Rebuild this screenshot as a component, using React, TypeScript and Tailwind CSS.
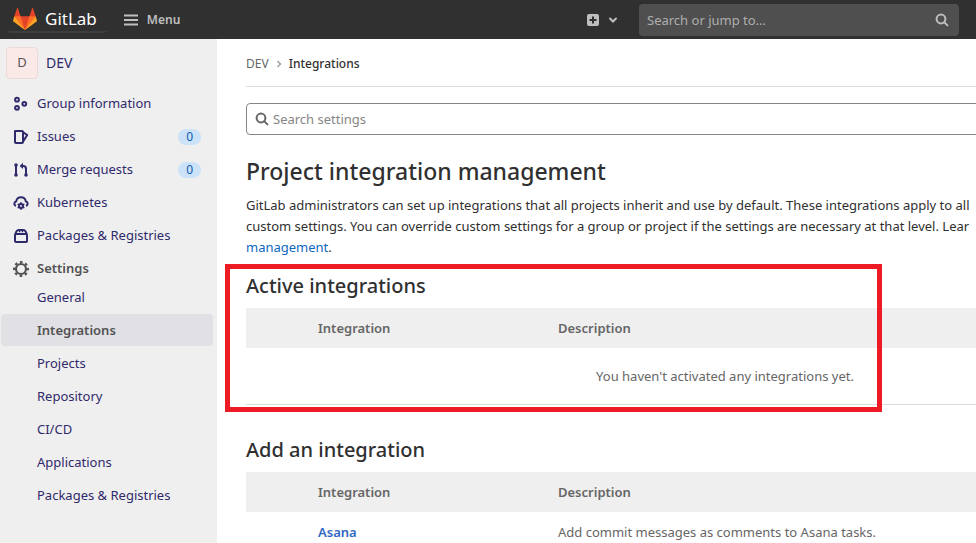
import type { ReactNode } from 'react';
import { useState } from 'react';

interface NavItem {
  label: string;
  icon: ReactNode;
  count?: number;
}

interface Integration {
  name: string;
  description: string;
}

const GroupIcon = () => (
  <svg viewBox="0 0 16 16" className="size-4" fill="none" stroke="currentColor" strokeWidth="2">
    <circle cx="4" cy="3.7" r="1.9" />
    <circle cx="4" cy="11.8" r="1.9" />
    <circle cx="11.3" cy="7.8" r="1.9" />
  </svg>
);

const IssuesIcon = () => (
  <svg viewBox="0 0 16 16" className="size-4" fill="none" stroke="currentColor" strokeWidth="2" strokeLinejoin="round">
    <path d="M2 2h7a1 1 0 0 1 1 1v10a1 1 0 0 1-1 1H3a1 1 0 0 1-1-1z" />
    <path d="M10 3.2 14.2 6 10 12.6" />
  </svg>
);

const MergeIcon = () => (
  <svg viewBox="0 0 16 16" className="size-4" fill="none" stroke="currentColor" strokeWidth="2">
    <path d="M3 3v10M8.5 4h1.8A2.7 2.7 0 0 1 13 6.7V13" />
    <path d="M10 .8 6.6 3.9 10 7z" fill="currentColor" stroke="none" />
    <circle cx="3" cy="3" r="1.8" fill="currentColor" stroke="none" />
    <circle cx="3" cy="13" r="1.8" fill="currentColor" stroke="none" />
    <circle cx="13" cy="13" r="1.8" fill="currentColor" stroke="none" />
  </svg>
);

const CloudGearIcon = () => (
  <svg viewBox="0 0 16 16" className="size-4" fill="none" stroke="currentColor" strokeWidth="2" strokeLinecap="round">
    <path d="M2.2 10.6A2.6 2.6 0 0 1 3.2 6.2 4.9 4.9 0 0 1 12.8 6.2 2.6 2.6 0 0 1 13.8 10.6" />
    <circle cx="8" cy="11" r="2" />
    <path d="M8 7.8v.6M8 13.6v.6M5.2 9.4l.5.3M10.3 12.3l.5.3M5.2 12.6l.5-.3M10.3 9.7l.5-.3" strokeWidth="1.6" />
  </svg>
);

const PackageIcon = () => (
  <svg viewBox="0 0 16 16" className="size-4" fill="none" stroke="currentColor" strokeWidth="2" strokeLinejoin="round">
    <rect x="2" y="6" width="12" height="8" rx="1" />
    <path d="M2.4 6C3 3.5 4.2 2 6 2h4c1.8 0 3 1.5 3.6 4" />
    <path d="M6.6 2v2.2M9.4 2v2.2" strokeWidth="1.4" />
  </svg>
);

const GearIcon = () => (
  <svg viewBox="0 0 16 16" className="size-4" fill="none" stroke="currentColor">
    <circle cx="8" cy="8" r="5" strokeWidth="2.2" />
    <circle cx="8" cy="8" r="6.9" strokeWidth="2.2" strokeDasharray="2.6 2.819" strokeDashoffset="1.3" />
  </svg>
);

const SearchIcon = () => (
  <svg viewBox="0 0 14 14" className="size-3.5" fill="none" stroke="currentColor" strokeWidth="2">
    <circle cx="6" cy="6" r="4.4" />
    <path d="m9.4 9.4 3 3" strokeLinecap="round" />
  </svg>
);

const TanukiLogo = () => (
  <svg viewBox="0 0 36 36" className="size-6">
    <path fill="#e24329" d="m2 14 9.38 9v-9l-4-12.28c-.205-.632-1.176-.632-1.38 0z" />
    <path fill="#e24329" d="m34 14-9.38 9v-9l4-12.28c.205-.632 1.176-.632 1.38 0z" />
    <path fill="#e24329" d="M18 34.38 3 14h30z" />
    <path fill="#fc6d26" d="M18 34.38 11.38 14H2l4 11z" />
    <path fill="#fc6d26" d="M18 34.38 24.62 14H34l-4 11z" />
    <path fill="#fca326" d="M2 14 .1 20.16c-.18.565 0 1.2.5 1.56l17.42 12.66z" />
    <path fill="#fca326" d="m34 14 1.9 6.16c.18.565 0 1.2-.5 1.56L18 34.38z" />
  </svg>
);

const navItems: NavItem[] = [
  { label: 'Group information', icon: <GroupIcon /> },
  { label: 'Issues', icon: <IssuesIcon />, count: 0 },
  { label: 'Merge requests', icon: <MergeIcon />, count: 0 },
  { label: 'Kubernetes', icon: <CloudGearIcon /> },
  { label: 'Packages & Registries', icon: <PackageIcon /> },
];

const settingsItems = [
  'General',
  'Integrations',
  'Projects',
  'Repository',
  'CI/CD',
  'Applications',
  'Packages & Registries',
];

const available: Integration[] = [
  { name: 'Asana', description: 'Add commit messages as comments to Asana tasks.' },
];

function IntegrationTable({ label, rows }: { label: string; rows: Integration[] }) {
  return (
    <table aria-label={label} className="w-full table-fixed text-left">
      <colgroup>
        <col className="w-14" />
        <col className="w-60" />
        <col />
      </colgroup>
      <thead className="bg-[#efefef] text-[#666]">
        <tr className="h-10">
          <th />
          <th className="px-4 pt-0.5 font-semibold">Integration</th>
          <th className="px-4 pt-0.5 font-semibold">Description</th>
        </tr>
      </thead>
      <tbody>
        {rows.length === 0 && (
          <tr className="h-14 border-b border-[#dcdcde]">
            <td colSpan={3} className="pt-0.5 text-center text-[#666]">
              You haven't activated any integrations yet.
            </td>
          </tr>
        )}
        {rows.map((row) => (
          <tr key={row.name} className="h-10 border-b border-[#dcdcde]">
            <td />
            <td className="px-4 pt-0.5">
              <a href="#" className="font-semibold text-[#2f68c4]">{row.name}</a>
            </td>
            <td className="px-4 pt-0.5 text-[#666]">{row.description}</td>
          </tr>
        ))}
      </tbody>
    </table>
  );
}

export default function App() {
  const [query, setQuery] = useState('');
  const [filter, setFilter] = useState('');

  return (
    <div className="flex h-screen flex-col overflow-hidden bg-white font-['Noto_Sans',sans-serif] text-[13px] text-[#303030]">
      {/* Top bar */}
      <header className="flex h-[39px] shrink-0 items-center bg-[#303030] pr-[17px] pl-[7px] text-[#bfbfbf]">
        <a href="#" className="flex h-[33px] items-center gap-2 self-start rounded-b border-b-2 border-[#3e3e3e] pt-1.5 pr-2.5 pl-1.5 text-white">
          <TanukiLogo />
          <span className="text-[17px]">GitLab</span>
        </a>
        <button className="ml-4 flex items-center gap-2 text-xs font-semibold">
          <svg viewBox="0 0 16 16" className="size-4" stroke="currentColor" strokeWidth="2">
            <path d="M1 3.5h14M1 8h14M1 12.5h14" />
          </svg>
          Menu
        </button>
        <button aria-label="Create new" className="mr-5 ml-auto flex items-center gap-2">
          <svg viewBox="0 0 12 12" className="size-3">
            <rect width="12" height="12" rx="2" fill="currentColor" />
            <path d="M6 2.5v7M2.5 6h7" stroke="#303030" strokeWidth="2" />
          </svg>
          <svg viewBox="0 0 12 12" className="size-3" fill="none" stroke="currentColor" strokeWidth="2" strokeLinecap="round">
            <path d="m3 4.5 3 3 3-3" />
          </svg>
        </button>
        <label className="flex h-8 w-80 items-center rounded bg-[#4f4f4f] pr-2.5 pl-2">
          <input
            type="text"
            aria-label="Search or jump to"
            placeholder="Search or jump to…"
            value={query}
            onChange={(e) => setQuery(e.target.value)}
            className="min-w-0 flex-1 pt-0.5 outline-none placeholder:text-[#aeaeae]"
          />
          <SearchIcon />
        </label>
      </header>

      <div className="flex min-h-0 flex-1">
        {/* Sidebar */}
        <nav className="w-[217px] shrink-0 bg-[#efefef] pr-1 pl-px text-[#2f2a6b]">
          <a href="#" className="flex h-[47px] items-center gap-2 pl-[5px]">
            <span className="flex size-8 items-center justify-center rounded border border-[#ecd9d8] bg-[#fbe9e7] text-[#555]">
              D
            </span>
            <span className="text-sm">DEV</span>
          </a>
          <ul>
            {navItems.map((item) => (
              <li key={item.label} className="mt-px">
                <a href="#" className="flex h-8 items-center gap-2 px-3 pt-0.5">
                  {item.icon}
                  <span>{item.label}</span>
                  {item.count !== undefined && (
                    <span className="ml-auto rounded-full bg-[#cbe2f9] px-2 text-xs text-[#0b5cad]">
                      {item.count}
                    </span>
                  )}
                </a>
              </li>
            ))}
            <li className="mt-px">
              <a href="#" className="flex h-8 items-center gap-2 pt-0.5 pl-3 font-semibold text-[#525252]">
                <GearIcon />
                <span>Settings</span>
              </a>
              <ul className="-mt-1">
                {settingsItems.map((label) => (
                  <li key={label} className="mt-px">
                    <a
                      href="#"
                      className={
                        label === 'Integrations'
                          ? 'flex h-8 items-center rounded bg-[#e1e0e5] pt-0.5 pl-9 font-semibold text-[#525252]'
                          : 'flex h-8 items-center pt-0.5 pl-9'
                      }
                    >
                      {label}
                    </a>
                  </li>
                ))}
              </ul>
            </li>
          </ul>
        </nav>

        {/* Content */}
        <main className="min-w-0 flex-1 overflow-hidden pl-[29px]">
          <div className="min-w-[958px]">
            <div className="flex h-12 items-center gap-1.5 border-b border-[#dcdcde] pt-0.5 text-xs">
              <a href="#" className="text-[#666]">DEV</a>
              <svg viewBox="0 0 8 8" className="size-2" fill="none" stroke="#999" strokeWidth="1.3">
                <path d="m2.5 1 3 3-3 3" />
              </svg>
              <a href="#" className="font-medium">Integrations</a>
            </div>

            <label className="mt-4 flex h-8 items-center gap-1 rounded border border-[#868686] px-2 text-[#666]">
              <SearchIcon />
              <input
                type="text"
                aria-label="Search settings"
                placeholder="Search settings"
                value={filter}
                onChange={(e) => setFilter(e.target.value)}
                className="min-w-0 flex-1 pt-0.5 outline-none placeholder:text-[#868686]"
              />
            </label>

            <h1 className="mt-5 text-[23px] leading-8 font-medium">Project integration management</h1>
            <p className="mt-2 leading-[21px] whitespace-nowrap">
              GitLab administrators can set up integrations that all projects inherit and use by default. These
              integrations apply to all
              <br />
              custom settings. You can override custom settings for a group or project if the settings are necessary
              at that level. Lear
              <br />
              <a href="#" className="text-[#1068bf]">management</a>.
            </p>

            <section className="relative mt-3.5">
              <h2 className="mb-2 text-xl font-medium">Active integrations</h2>
              <IntegrationTable label="Active integrations" rows={[]} />
              <div className="pointer-events-none absolute -top-2 -bottom-[7px] -left-[21px] w-[657px] border-[5px] border-[#ed1c24]" />
            </section>

            <section className="mt-[31px]">
              <h2 className="mb-2 text-xl font-medium">Add an integration</h2>
              <IntegrationTable label="Add an integration" rows={available} />
            </section>
          </div>
        </main>
      </div>
    </div>
  );
}
